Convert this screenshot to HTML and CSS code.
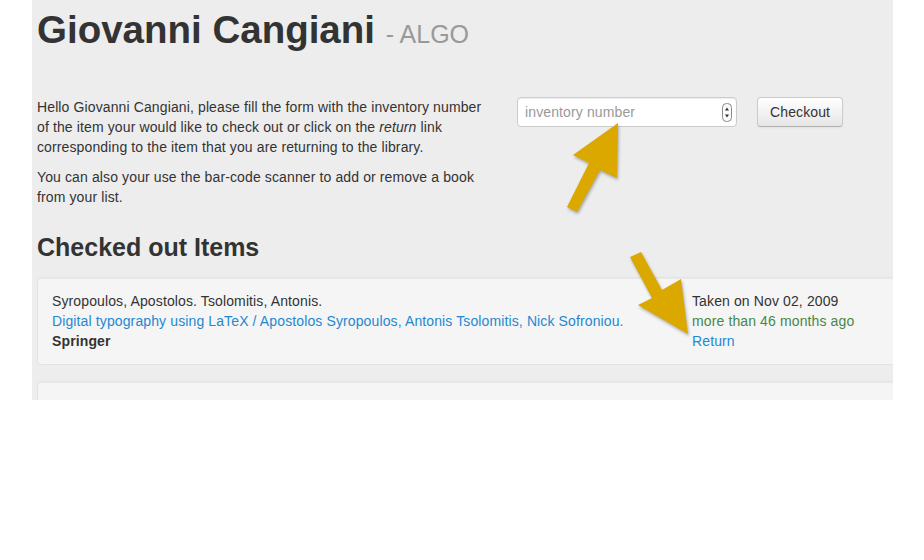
FILE: index.html
```html
<!DOCTYPE html>
<html>
<head>
<meta charset="utf-8">
<title>Checkout</title>
<link rel="stylesheet" href="styles.css">
</head>
<body>
<div class="panel">
  <div class="container">
    <h1 class="title">Giovanni Cangiani <small>- ALGO</small></h1>
    <div class="row">
      <div class="intro">
        <p>Hello Giovanni Cangiani, please fill the form with the inventory number of the item your would like to check out or click on the <em>return</em> link corresponding to the item that you are returning to the library.</p>
        <p>You can also your use the bar-code scanner to add or remove a book from your list.</p>
      </div>
      <form class="checkout-form">
        <div class="field">
          <input class="field-input" type="text" placeholder="inventory number">
          <svg class="spinner" width="10" height="19" viewBox="0 0 10 19">
            <rect x="0.5" y="0.5" width="9" height="18" rx="4" ry="4" fill="#fafafa" stroke="#8a8a8a"/>
            <path d="M3 7.5 L5 4.5 L7 7.5 Z" fill="#333"/>
            <path d="M3 11.5 L5 14.5 L7 11.5 Z" fill="#333"/>
          </svg>
        </div>
        <button class="btn" type="button">Checkout</button>
      </form>
    </div>
    <h3 class="section-title">Checked out Items</h3>
    <div class="item">
      <div class="item-main">
        <div>Syropoulos, Apostolos. Tsolomitis, Antonis.</div>
        <div><a href="#">Digital typography using LaTeX / Apostolos Syropoulos, Antonis Tsolomitis, Nick Sofroniou.</a></div>
        <div><strong>Springer</strong></div>
      </div>
      <div class="item-side">
        <div>Taken on Nov 02, 2009</div>
        <div class="ago">more than 46 months ago</div>
        <div><a href="#">Return</a></div>
      </div>
    </div>
    <div class="item"></div>
  </div>
  <svg class="arrows" width="861" height="400" viewBox="32 0 861 400">
    <polygon class="arrow" points="618,123 617,178 600,170 577,212 567,207 589,163 573,155"/>
    <polygon class="arrow" points="630,257 641,252 662,290 681,279 688,334 638,305 652,298"/>
  </svg>
</div>
</body>
</html>
```

FILE: styles.css
```css
html, body {
  margin: 0;
  padding: 0;
  background: #ffffff;
}

body {
  font-family: "Liberation Sans", Arial, sans-serif;
  font-size: 14px;
  line-height: 20px;
  color: #333333;
}

.panel {
  position: relative;
  margin-left: 32px;
  width: 861px;
  height: 400px;
  background: #ededed;
  overflow: hidden;
}

.container {
  width: 940px;
  padding-left: 5px;
  padding-top: 1px;
}

.title {
  margin: 9px 0 0 0;
  font-size: 38.5px;
  line-height: 40px;
  font-weight: bold;
  color: #333333;
}

.title small {
  font-size: 25px;
  font-weight: normal;
  color: #999999;
}

.row {
  display: flex;
  margin-top: 43px;
}

.intro {
  width: 460px;
  margin-right: 20px;
  letter-spacing: 0.12px;
}

.intro p {
  margin: 0 0 10px 0;
}

.checkout-form {
  display: flex;
  align-items: flex-start;
  gap: 20px;
  margin: 0;
}

.field {
  display: flex;
  align-items: center;
  box-sizing: border-box;
  width: 220px;
  height: 30px;
  background: #ffffff;
  border: 1px solid #cccccc;
  border-radius: 4px;
  box-shadow: inset 0 1px 1px rgba(0, 0, 0, 0.075);
  padding: 0 4px 0 7px;
}

.field-input {
  flex: 1;
  min-width: 0;
  border: 0;
  outline: none;
  background: transparent;
  padding: 0;
  font-family: "Liberation Sans", Arial, sans-serif;
  font-size: 14px;
  letter-spacing: 0.12px;
  color: #555555;
}

.field-input::placeholder {
  color: #999999;
}

.spinner {
  display: block;
  flex: none;
}

.btn {
  box-sizing: border-box;
  height: 30px;
  width: 86px;
  padding: 0 12px;
  font-family: "Liberation Sans", Arial, sans-serif;
  font-size: 14px;
  letter-spacing: 0.12px;
  color: #333333;
  background: linear-gradient(#ffffff, #e6e6e6);
  border: 1px solid #cccccc;
  border-bottom-color: #b3b3b3;
  border-radius: 4px;
  box-shadow: inset 0 1px 0 rgba(255, 255, 255, 0.2), 0 1px 2px rgba(0, 0, 0, 0.05);
}

.section-title {
  margin: 10px 0 10px 0;
  font-size: 25px;
  line-height: 40px;
  font-weight: bold;
  color: #333333;
}

.item {
  display: grid;
  grid-template-columns: 640px 1fr;
  box-sizing: border-box;
  min-height: 88px;
  margin-bottom: 16px;
  padding: 13px 14px;
  background: #f5f5f5;
  border: 1px solid #e3e3e3;
  border-radius: 4px;
  box-shadow: inset 0 1px 1px rgba(0, 0, 0, 0.05);
  letter-spacing: 0.12px;
}

a {
  color: #1f88d0;
  text-decoration: none;
}

.ago {
  color: #468847;
}

.arrows {
  position: absolute;
  left: 0;
  top: 0;
  pointer-events: none;
}

.arrow {
  fill: #dba800;
  filter: drop-shadow(1px 2px 1.5px rgba(0, 0, 0, 0.3));
}
```
